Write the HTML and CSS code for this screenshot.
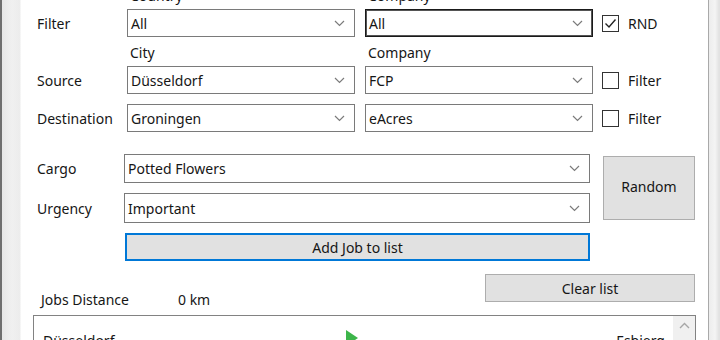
FILE: index.html
```html
<!DOCTYPE html>
<html lang="en">
<head>
    <meta charset="UTF-8">
    <title>Job Generator</title>
    <link rel="stylesheet" href="styles.css">
</head>
<body>
    <div class="window">
        <div class="edge-left"></div>
        <div class="content">
            <!-- route filters -->
            <div class="row head">
                <span></span>
                <span class="caption">Country</span>
                <span class="caption">Company</span>
            </div>
            <div class="row field">
                <span class="label">Filter</span>
                <div class="combo"><span>All</span><svg class="chev" width="11" height="7" viewBox="0 0 11 7"><polyline points="1,1 5.5,5.5 10,1"/></svg></div>
                <div class="combo focused"><span>All</span><svg class="chev" width="11" height="7" viewBox="0 0 11 7"><polyline points="1,1 5.5,5.5 10,1"/></svg></div>
                <label class="check"><span class="box checked"><svg width="13" height="11" viewBox="0 0 13 11"><polyline points="1.5,5.5 5,9 11.5,1.5"/></svg></span>RND</label>
            </div>
            <div class="row head">
                <span></span>
                <span class="caption">City</span>
                <span class="caption">Company</span>
            </div>
            <div class="row field">
                <span class="label">Source</span>
                <div class="combo"><span>Düsseldorf</span><svg class="chev" width="11" height="7" viewBox="0 0 11 7"><polyline points="1,1 5.5,5.5 10,1"/></svg></div>
                <div class="combo"><span>FCP</span><svg class="chev" width="11" height="7" viewBox="0 0 11 7"><polyline points="1,1 5.5,5.5 10,1"/></svg></div>
                <label class="check"><span class="box"></span>Filter</label>
            </div>
            <div class="row field spaced">
                <span class="label">Destination</span>
                <div class="combo"><span>Groningen</span><svg class="chev" width="11" height="7" viewBox="0 0 11 7"><polyline points="1,1 5.5,5.5 10,1"/></svg></div>
                <div class="combo"><span>eAcres</span><svg class="chev" width="11" height="7" viewBox="0 0 11 7"><polyline points="1,1 5.5,5.5 10,1"/></svg></div>
                <label class="check"><span class="box"></span>Filter</label>
            </div>

            <!-- cargo -->
            <div class="cargo">
                <span class="label">Cargo</span>
                <div class="combo"><span>Potted Flowers</span><svg class="chev" width="11" height="7" viewBox="0 0 11 7"><polyline points="1,1 5.5,5.5 10,1"/></svg></div>
                <button class="btn random">Random</button>
                <span class="label">Urgency</span>
                <div class="combo"><span>Important</span><svg class="chev" width="11" height="7" viewBox="0 0 11 7"><polyline points="1,1 5.5,5.5 10,1"/></svg></div>
                <span></span>
                <button class="btn add">Add Job to list</button>
            </div>

            <!-- job list -->
            <div class="jobs-bar">
                <span class="jobs-label">Jobs Distance</span>
                <span class="jobs-value">0 km</span>
                <button class="btn clear">Clear list</button>
            </div>
            <div class="listbox">
                <div class="items">
                    <div class="item">
                        <span>Düsseldorf</span>
                        <svg class="go" width="12" height="16" viewBox="0 0 12 16"><polygon points="0,0 12,8 0,16"/></svg>
                        <span class="to">Esbjerg</span>
                    </div>
                </div>
                <div class="scroll">
                    <svg width="11" height="7" viewBox="0 0 11 7"><polyline points="1,6 5.5,1.5 10,6"/></svg>
                </div>
            </div>
        </div>
        <div class="edge-right"></div>
    </div>
</body>
</html>
```

FILE: styles.css
```css
/* base */
body {
    margin: 0;
    background: #fff;
    font-family: 'Noto Sans', 'Open Sans', sans-serif;
    font-size: 14px;
    color: #161616;
    overflow: hidden;
}

.window {
    display: flex;
    height: 340px;
    overflow: hidden;
}

/* window frame */
.edge-left {
    width: 21px;
    flex-shrink: 0;
    background: linear-gradient(to right, #6e6e6e 0, #6e6e6e 2px, #e6e6e6 2px, #f0f0f0 12px, #ececec 20px, #fff 21px);
}

.edge-right {
    width: 12px;
    flex-shrink: 0;
    background: linear-gradient(to right, #a9a9a9 0, #a9a9a9 1px, #ececec 1px, #f4f4f4 7px, #e2e2e2 11px);
}

.content {
    flex: 1;
    margin-top: -20px;
}

/* filter grid */
.row {
    display: grid;
    grid-template-columns: 96px 228px 228px auto;
    column-gap: 10px;
}

.row.head {
    height: 29px;
    align-items: end;
}

.row.field {
    height: 28px;
    align-items: center;
}

.row.spaced {
    margin-top: 10px;
}

.caption {
    padding: 0 0 4px 3px;
    line-height: 18px;
}

.label {
    padding-left: 16px;
}

/* combo box */
.combo {
    height: 28px;
    box-sizing: border-box;
    border: 1px solid #7a7a7a;
    background: #fff;
    display: flex;
    align-items: center;
    justify-content: space-between;
    padding: 0 9px 0 3px;
}

.combo.focused {
    border: 1px solid #1a1a1a;
    box-shadow: inset 0 0 0 1px #555;
}

.chev polyline {
    fill: none;
    stroke: #7b7b7b;
    stroke-width: 1.2;
}

/* checkbox */
.check {
    display: flex;
    align-items: center;
    gap: 9px;
    margin-left: -1px;
}

.box {
    width: 17px;
    height: 17px;
    box-sizing: border-box;
    border: 1px solid #333;
    background: #fff;
    display: flex;
    align-items: center;
    justify-content: center;
}

.box polyline {
    fill: none;
    stroke: #222;
    stroke-width: 1.4;
}

/* cargo block */
.cargo {
    display: grid;
    grid-template-columns: 93px 466px 95px;
    grid-template-rows: 29px 30px 28px;
    column-gap: 10px;
    row-gap: 10px;
    align-items: center;
    margin-top: 22px;
}

.cargo .combo {
    height: 100%;
}

/* buttons */
.btn {
    font-family: inherit;
    font-size: 14px;
    color: #161616;
    background: #e1e1e1;
    border: 1px solid #adadad;
    padding: 0;
    height: 28px;
}

.random {
    grid-row: span 2;
    align-self: start;
    margin: 2px 0 0 3px;
    height: 64px;
    padding-bottom: 4px;
}

.add {
    height: 28px;
    margin-left: 1px;
    border: 2px solid #0078d7;
}

/* jobs bar */
.jobs-bar {
    display: flex;
    align-items: flex-start;
    margin-top: 13px;
}

.jobs-label {
    margin: 17px 0 0 20px;
    line-height: 18px;
    width: 137px;
}

.jobs-value {
    margin-top: 17px;
    line-height: 18px;
    width: 307px;
}

.clear {
    width: 210px;
}

/* list */
.listbox {
    display: flex;
    margin: 6px 0 0 12px;
    width: 663px;
    height: 60px;
    box-sizing: border-box;
    border: 1px solid #828282;
}

.items {
    flex: 1;
}

.item {
    display: grid;
    grid-template-columns: 1fr auto 1fr;
    align-items: start;
    padding: 16px 8px 0 9px;
    line-height: 18px;
}

.go {
    margin: -2px 5px 0 0;
    fill: #3db54a;
}

.to {
    justify-self: end;
}

.scroll {
    width: 22px;
    background: #f0f0f0;
    display: flex;
    justify-content: center;
    padding-top: 6px;
}

.scroll polyline {
    fill: none;
    stroke: #a6a6a6;
    stroke-width: 1.4;
}
```
